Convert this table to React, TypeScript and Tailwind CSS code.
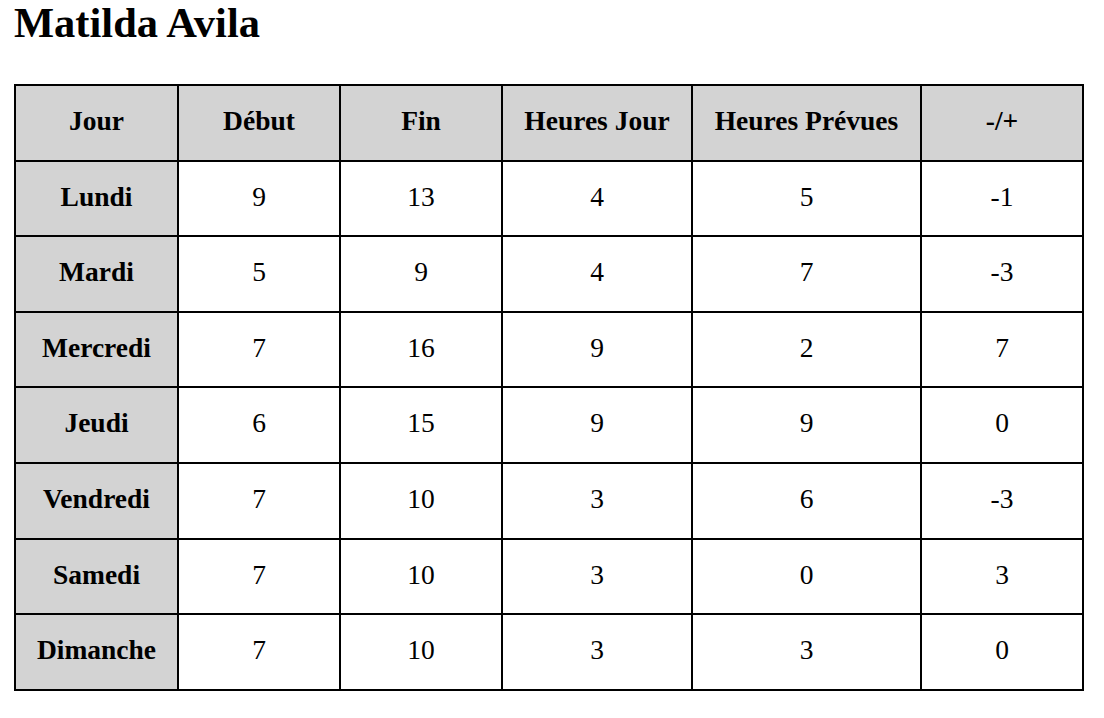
import React from "react";

const rows: [string, number, number, number, number, number][] = [
  ["Lundi", 9, 13, 4, 5, -1],
  ["Mardi", 5, 9, 4, 7, -3],
  ["Mercredi", 7, 16, 9, 2, 7],
  ["Jeudi", 6, 15, 9, 9, 0],
  ["Vendredi", 7, 10, 3, 6, -3],
  ["Samedi", 7, 10, 3, 0, 3],
  ["Dimanche", 7, 10, 3, 3, 0],
];

const headers = ["Jour", "Début", "Fin", "Heures Jour", "Heures Prévues", "-/+"];

export default function App() {
  const cell =
    "border-2 border-black px-0 pt-[19px] pb-[23px] text-center align-middle leading-[31.6px]";
  return (
    <div
      className="min-h-[718px] bg-white text-black"
      style={{ fontFamily: '"Liberation Serif", "Times New Roman", serif' }}
    >
      <h1 className="m-0 pl-[14px] text-[42.5px] font-bold leading-[46px]">Matilda Avila</h1>
      <table className="ml-[14px] mt-[38px] w-[1070px] table-fixed border-collapse text-[27.5px]">
        <colgroup>
          <col className="w-[163px]" />
          <col className="w-[162px]" />
          <col className="w-[162px]" />
          <col className="w-[190px]" />
          <col className="w-[229px]" />
          <col className="w-[162px]" />
        </colgroup>
        <thead>
          <tr>
            {headers.map((h) => (
              <th key={h} className={`${cell} bg-[#d3d3d3] font-bold`}>
                {h}
              </th>
            ))}
          </tr>
        </thead>
        <tbody>
          {rows.map((r) => (
            <tr key={r[0]}>
              <th className={`${cell} bg-[#d3d3d3] font-bold`}>{r[0]}</th>
              {r.slice(1).map((v, i) => (
                <td key={i} className={`${cell} font-normal`}>
                  {v}
                </td>
              ))}
            </tr>
          ))}
        </tbody>
      </table>
    </div>
  );
}
